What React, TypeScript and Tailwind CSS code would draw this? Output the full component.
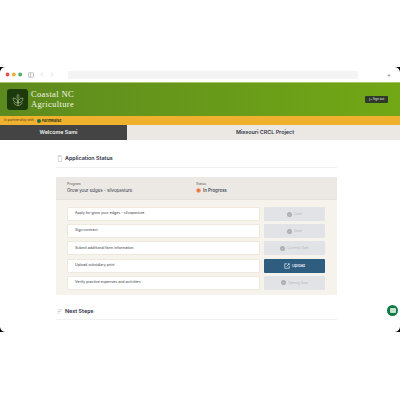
import React from "react";

function Check({ className }: { className?: string }) {
  return (
    <svg viewBox="0 0 6 6" className={className}>
      <circle cx="3" cy="3" r="3" fill="#a9adb3" />
      <path d="M1.600 3l1 1 1.800-2" stroke="#e3e5e8" strokeWidth="0.6" fill="none" />
    </svg>
  );
}

function Corner({ className, d }: { className: string; d: string }) {
  return (
    <svg viewBox="0 0 5 5" className={`absolute w-[5px] h-[5px] ${className}`}>
      <path d={d} fill="#000" />
    </svg>
  );
}

function Row({ text, button, active }: { text: string; button: string; active?: boolean }) {
  return (
    <div className="flex gap-[4px] h-[14px]">
      <div className="w-[193px] bg-white border border-[#f0e8dc] rounded-[1px] flex items-center pl-[7px] text-[3.6px] text-[#3a3f4a]">
        {text}
      </div>
      {active ? (
        <div className="w-[61px] bg-[#2f5d80] rounded-[1px] flex items-center justify-center gap-[2px] text-[3.8px] font-medium text-white">
          <svg viewBox="0 0 8 8" className="w-[6px] h-[6px]" fill="none" stroke="#fff" strokeWidth="0.8">
            <path d="M4 1H1v6h6V4M3.500 4.500L7 1M5 1h2v2" />
          </svg>
          {button}
        </div>
      ) : (
        <div className="w-[61px] bg-[#e1e3e6] rounded-[1px] flex items-center justify-center gap-[2px] text-[3px] text-[#b4b7bb]">
          <Check className="w-[5px] h-[5px]" />
          {button}
        </div>
      )}
    </div>
  );
}

export default function App() {
  return (
    <div className="relative w-[400px] h-[400px] bg-white overflow-hidden font-['Inter','Liberation_Sans',sans-serif]">
      <div className="h-[67px]" />
      <div className="relative h-[265px] overflow-hidden">
        {/* browser bar */}
        <div className="h-[15px] flex items-center pl-[5px]">
          <svg viewBox="0 0 18 5" className="w-[18px] h-[5px]">
            <circle cx="2.500" cy="2.500" r="1.900" fill="#e5534b" />
            <circle cx="8.900" cy="2.500" r="1.900" fill="#e9ad3a" />
            <circle cx="15.200" cy="2.500" r="1.900" fill="#4fae5f" />
          </svg>
          <svg viewBox="0 0 6 6" className="w-[6px] h-[6px] ml-[5px]" fill="none" stroke="#9a9a9a" strokeWidth="0.6">
            <rect x="0.5" y="0.8" width="5" height="4.4" rx="0.6" />
            <path d="M2.400 0.8v4.400" />
          </svg>
          <svg viewBox="0 0 4 6" className="w-[4px] h-[5px] ml-[6px]" fill="none" stroke="#c4c4c4" strokeWidth="0.7">
            <path d="M3 .8L1 3l2 2.200" />
          </svg>
          <svg viewBox="0 0 4 6" className="w-[4px] h-[5px] ml-[6px]" fill="none" stroke="#c4c4c4" strokeWidth="0.7">
            <path d="M1 .8L3 3 1 5.200" />
          </svg>
          <div className="w-[290px] h-[8px] ml-[14px] bg-[#f4f4f4] rounded-[1px]" />
          <span className="ml-[29px] text-[6px] leading-none text-[#777]">+</span>
        </div>

        {/* header */}
        <div className="h-[34px] border-t border-[#a9c46c] bg-gradient-to-r from-[#5d8a1e] to-[#72a815] flex items-center justify-between pl-[7px] pr-[12px]">
          <div className="flex items-center gap-[3px]">
            <div className="w-[21px] h-[21px] rounded-[3px] bg-[#1c3a0c] flex items-center justify-center">
              <svg viewBox="0 0 14 14" className="w-[14px] h-[14px]" fill="none" stroke="#b9cfa0" strokeWidth="0.6">
                <path d="M7 1.500c1.300 1 1.300 2.800 0 4-1.300-1.200-1.300-3 0-4zM7 5.500v7M2 5c2.800 0 5 1.800 5 5-2.800 0-5-1.800-5-5zM12 5c-2.800 0-5 1.800-5 5 2.800 0 5-1.800 5-5zM2.800 9.500C3.500 11.500 5 12.500 7 12.500s3.500-1 4.200-3" />
              </svg>
            </div>
            <div className="font-['Liberation_Serif',serif] text-[8.500px] leading-[9.500px] tracking-[0.35px] text-[#f4f6e8]">
              Coastal NC
              <br />
              Agriculture
            </div>
          </div>
          <div className="w-[23px] h-[7px] bg-[#2f3a2a] rounded-[1px] flex items-center justify-center text-[3px] text-[#e4e4e4] gap-[1px]">
            <svg viewBox="0 0 4 4" className="w-[3px] h-[3px]" fill="none" stroke="#e4e4e4" strokeWidth="0.5">
              <path d="M1.500.5H.5v3h1M1.500 2h2M2.800 1.200l.8.8-.8.8" />
            </svg>
            Sign out
          </div>
        </div>

        {/* partner strip */}
        <div className="h-[9px] bg-[#efb12e] flex items-center pl-[4px] text-[3.400px] text-[#4b4424]">
          <span>In partnership with</span>
          <span className="w-[4px] h-[4px] rounded-full bg-[#1f6b43] ml-[3px] mr-[1px]" />
          <span className="font-bold text-[3.800px] text-[#27361a]">FarmRaise</span>
        </div>

        {/* tabs */}
        <div className="h-[15px] flex">
          <div className="w-[127px] bg-[#444444] flex items-center justify-center pr-[10px] text-[5.300px] font-semibold text-[#f2f2f2]">
            Welcome Sami
          </div>
          <div className="flex-1 bg-[#ebe8e4] flex items-center justify-center pl-[3px] text-[5.400px] font-semibold text-[#33384a]">
            Missouri CRCL Project
          </div>
        </div>

        {/* content */}
        <div className="pl-[56px] w-[337px]">
          <div className="h-[28px] border-b border-[#f1f1f1] flex items-center gap-[2px] pt-[10px] pl-[1px]">
            <svg viewBox="0 0 7 8" className="w-[6px] h-[7px]" fill="none" stroke="#a8a8a8" strokeWidth="0.5">
              <path d="M1.500 1.500h4v6h-4zM.5.5h4v1" />
            </svg>
            <span className="text-[5.400px] font-semibold text-[#272c44]">Application Status</span>
          </div>
          <div className="h-[9px]" />

          <div className="w-[281px] bg-[#f6f2ec]">
            <div className="h-[23px] bg-[#ece8e3] border-b border-[#e4e0da] flex items-center pl-[11px]">
              <div className="w-[129px]">
                <div className="text-[3.400px] leading-[5px] text-[#5b5b5b]">Program</div>
                <div className="text-[4.400px] leading-[7px] text-[#33384a]">Grow your edges - silvopasture</div>
              </div>
              <div>
                <div className="text-[3.400px] leading-[5px] text-[#5b5b5b]">Status</div>
                <div className="flex items-center gap-[2px] text-[4.400px] leading-[7px] font-medium text-[#33384a]">
                  <span className="w-[5px] h-[5px] rounded-full bg-[#e2703a] border border-[#f0b08c]" />
                  In Progress
                </div>
              </div>
            </div>
            <div className="pt-[7px] pb-[5px] pl-[11px] flex flex-col gap-[3.200px]">
              <Row text="Apply for grow your edges - silvopasture" button="Done" />
              <Row text="Sign contract" button="Done" />
              <Row text="Submit additional farm information" button="Currently Open" />
              <Row text="Upload subsidiary print" button="Upload" active />
              <Row text="Verify practice expenses and activities" button="Opening Soon" />
            </div>
          </div>

          <div className="h-[25px] border-b border-[#f1f1f1] flex items-center gap-[2px] pt-[9px] pl-[1px]">
            <svg viewBox="0 0 7 6" className="w-[6px] h-[5px]" fill="none" stroke="#a8a8a8" strokeWidth="0.6">
              <path d="M.5 1h6M.5 3h4M.5 5h2.500" />
            </svg>
            <span className="text-[5.400px] font-semibold text-[#272c44]">Next Steps</span>
          </div>
        </div>

        {/* floating chat button */}
        <div className="absolute left-[387px] top-[238px] w-[11px] h-[11px] rounded-full bg-[#0f7a45] flex items-center justify-center">
          <div className="w-[6px] h-[5px] bg-[#c5e3cf] rounded-[1px]" />
        </div>

        {/* window corners */}
        <Corner className="left-0 top-0" d="M0 0H5C2 .5.5 2 0 5Z" />
        <Corner className="right-0 top-0" d="M5 0H0C3 .5 4.500 2 5 5Z" />
        <Corner className="left-0 bottom-0" d="M0 5H5C2 4.500.5 3 0 0Z" />
        <Corner className="right-0 bottom-0" d="M5 5H0C3 4.500 4.500 3 5 0Z" />
      </div>
    </div>
  );
}
